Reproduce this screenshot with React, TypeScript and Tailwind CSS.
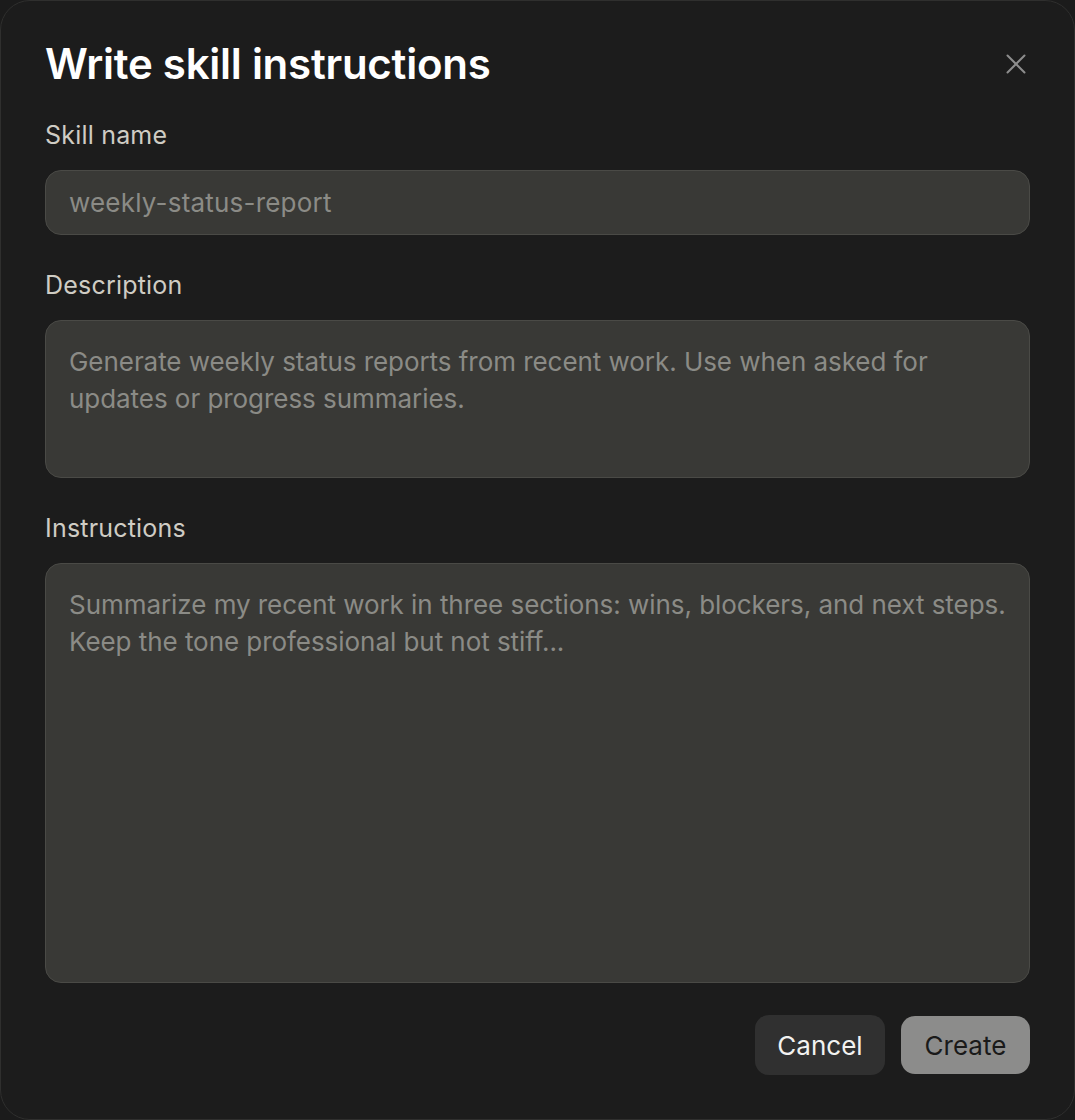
import { X } from "lucide-react";

const font = { fontFamily: "Inter, 'Noto Sans', sans-serif" };

function Field({ label, placeholder, tall }: { label: string; placeholder: string; tall?: string }) {
  return (
    <div className="flex flex-col">
      <label className="text-[25px] leading-[34px] text-[#cfccc4] tracking-[0.2px]">{label}</label>
      {tall ? (
        <textarea
          readOnly
          placeholder={placeholder}
          className={`mt-[18px] ${tall} w-full resize-none rounded-[16px] border border-[#4a4a46] bg-[#393936] pl-[23px] pr-[10px] pt-[22px] text-[26px] leading-[37px] text-[#e5e5e0] placeholder:text-[#8b8b86] outline-none tracking-[-0.05px]`}
          style={font}
        />
      ) : (
        <input
          readOnly
          placeholder={placeholder}
          className="mt-[18px] h-[65px] w-full rounded-[16px] border border-[#4a4a46] bg-[#393936] px-[23px] text-[26px] text-[#e5e5e0] placeholder:text-[#8b8b86] outline-none tracking-[0.2px]"
          style={font}
        />
      )}
    </div>
  );
}

export default function App() {
  return (
    <div className="w-[1075px] h-[1120px] bg-[#1b1b1b]" style={font}>
      <div className="h-full w-full rounded-[30px] border border-[#2f2f2e] bg-[#1c1c1c] px-[44px] pt-[37px]">
        <div className="flex items-center justify-between h-[52px]">
          <h2 className="text-[42px] leading-[52px] font-semibold text-white tracking-[-0.25px]">Write skill instructions</h2>
          <button className="mr-[-3px] text-[#8d8d8d]">
            <X className="size-[34px]" strokeWidth={1.4} />
          </button>
        </div>
        <div className="mt-[28px] flex flex-col gap-[33px]">
          <Field label="Skill name" placeholder="weekly-status-report" />
          <Field
            label="Description"
            tall="h-[158px]"
            placeholder="Generate weekly status reports from recent work. Use when asked for updates or progress summaries."
          />
          <Field
            label="Instructions"
            tall="h-[420px]"
            placeholder="Summarize my recent work in three sections: wins, blockers, and next steps. Keep the tone professional but not stiff..."
          />
        </div>
        <div className="mt-[32px] flex justify-end gap-[16px]">
          <button className="h-[60px] w-[130px] rounded-[14px] bg-[#303030] text-[26px] text-[#f2f2f0]">Cancel</button>
          <button className="mt-[1px] h-[58px] w-[129px] rounded-[14px] bg-[#8c8c8b] text-[26px] text-[#1a1a1a]">Create</button>
        </div>
      </div>
    </div>
  );
}
